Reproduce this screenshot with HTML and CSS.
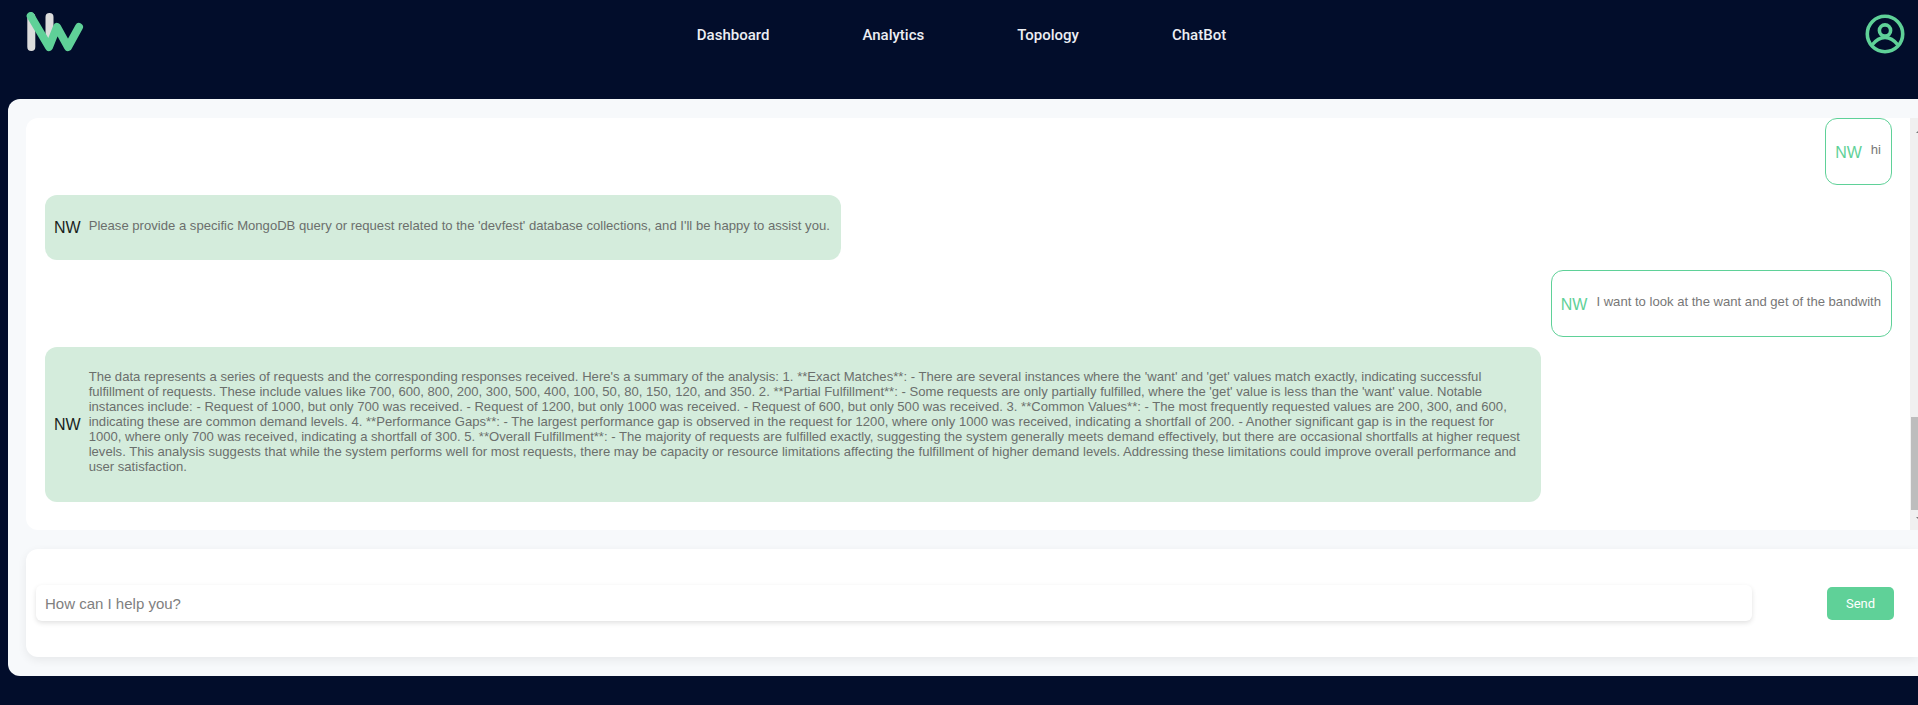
FILE: index.html
```html
<!DOCTYPE html>
<html>
<head>
<meta charset="utf-8"/>
<title>ChatBot</title>
<link rel="stylesheet" href="styles.css">
</head>
<body>

<header class="topbar">
  <svg class="logo" width="62" height="42" viewBox="0 0 62 42" fill="none" stroke-width="8" stroke-linecap="round" stroke-linejoin="round">
    <path d="M5.3 5V35M23.5 5V30" stroke="#dcdcdc"/>
    <path d="M4.7 4L23 35L31 15L42 35L53 15" stroke="#5fd198"/>
  </svg>
  <nav class="nav">
    <a>Dashboard</a>
    <a>Analytics</a>
    <a>Topology</a>
    <a>ChatBot</a>
  </nav>
  <svg class="profile" width="40" height="40" viewBox="0 0 40 40" fill="none" stroke="#5fd198" stroke-width="3.6">
    <circle cx="20" cy="20" r="17.7"/>
    <circle cx="20" cy="16.5" r="5.6"/>
    <path d="M7 31C11 26 15 23.5 20 23.5C25 23.5 29 26 33 31"/>
  </svg>
</header>

<main class="panel">
  <section class="chat">
    <div class="messages">
      <div class="msg user short">
        <span class="tag">NW</span>
        <p>hi</p>
      </div>
      <div class="msg bot first">
        <span class="tag">NW</span>
        <p>Please provide a specific MongoDB query or request related to the 'devfest' database collections, and I'll be happy to assist you.</p>
      </div>
      <div class="msg user second">
        <span class="tag">NW</span>
        <p>I want to look at the want and get of the bandwith</p>
      </div>
      <div class="msg bot long">
        <span class="tag">NW</span>
        <p>The data represents a series of requests and the corresponding responses received. Here's a summary of the analysis: 1. **Exact Matches**: - There are several instances where the 'want' and 'get' values match exactly, indicating successful fulfillment of requests. These include values like 700, 600, 800, 200, 300, 500, 400, 100, 50, 80, 150, 120, and 350. 2. **Partial Fulfillment**: - Some requests are only partially fulfilled, where the 'get' value is less than the 'want' value. Notable instances include: - Request of 1000, but only 700 was received. - Request of 1200, but only 1000 was received. - Request of 600, but only 500 was received. 3. **Common Values**: - The most frequently requested values are 200, 300, and 600, indicating these are common demand levels. 4. **Performance Gaps**: - The largest performance gap is observed in the request for 1200, where only 1000 was received, indicating a shortfall of 200. - Another significant gap is in the request for 1000, where only 700 was received, indicating a shortfall of 300. 5. **Overall Fulfillment**: - The majority of requests are fulfilled exactly, suggesting the system generally meets demand effectively, but there are occasional shortfalls at higher request levels. This analysis suggests that while the system performs well for most requests, there may be capacity or resource limitations affecting the fulfillment of higher demand levels. Addressing these limitations could improve overall performance and user satisfaction.</p>
      </div>
    </div>
    <div class="scrollbar">
      <span class="arrow up"></span>
      <span class="thumb"></span>
      <span class="arrow down"></span>
    </div>
  </section>

  <section class="composer">
    <input class="ask" type="text" placeholder="How can I help you?">
    <button class="send">Send</button>
  </section>
</main>

</body>
</html>
```

FILE: styles.css
```css
html, body {
   margin: 0;
   height: 100%;
   overflow: hidden;
}

body {
   background-color: #020d2b;
   font-family: "Liberation Sans", Arial, sans-serif;
}

.topbar {
   height: 99px;
   display: flex;
   align-items: flex-start;
   box-sizing: border-box;
   padding: 12px 13px 0 26px;
}

.logo {
   flex: none;
}

.nav {
   flex: 1;
   display: flex;
   justify-content: center;
   gap: 93px;
   padding: 13px 30px 0 0;
   font-family: Roboto, sans-serif;
   font-size: 15px;
   font-weight: 500;
   line-height: 20px;
   color: #eceef3;
}

.profile {
   flex: none;
   margin-top: 2px;
}

.panel {
   height: 577px;
   margin-left: 8px;
   box-sizing: border-box;
   padding: 19px 0 19px 18px;
   background-color: #f7f9fb;
   border-radius: 12px 0 0 12px;
   display: flex;
   flex-direction: column;
   gap: 19px;
}

.chat {
   height: 412px;
   flex: none;
   display: flex;
   background-color: white;
   border-radius: 12px 0 0 12px;
}

.messages {
   flex: 1;
   min-width: 0;
   padding: 0 18px 0 19px;
   display: flex;
   flex-direction: column;
   overflow: hidden;
}

.msg {
   display: flex;
   box-sizing: border-box;
   border-radius: 12px;
   flex: none;
}

.msg p {
   margin: 0;
   font-size: 13.1px;
   line-height: 15px;
   color: #6b6f6c;
}

.tag {
   flex: none;
   font-size: 16px;
}

.user {
   align-self: flex-end;
   align-items: flex-start;
   border: 1px solid #5fd198;
   background-color: white;
   padding: 23px 10px 0 9px;
   height: 67px;
}

.user .tag {
   color: #5fd198;
   margin: 2px 9px 0 0;
}

.user p {
   color: #777;
}

.bot {
   align-self: flex-start;
   align-items: center;
   background-color: #d4ecdc;
   padding: 0 12px 0 9px;
}

.bot .tag {
   color: #1a1f1c;
   margin-right: 8px;
}

.first {
   width: 796px;
   height: 65px;
   margin-top: 10px;
   padding-right: 4px;
}

.first p {
   padding-bottom: 4px;
}

.second {
   margin-top: 10px;
}

.long {
   width: 1496px;
   height: 155px;
   margin-top: 10px;
}

.long .tag {
   margin-top: 1px;
}

.long p {
   padding-bottom: 6px;
}

/* wider than what is left of the window, the right part gets clipped */
.scrollbar {
   flex: none;
   width: 17px;
   margin-right: -9px;
   box-sizing: border-box;
   padding: 12px 0 10px;
   background-color: #f0f0f0;
   display: flex;
   flex-direction: column;
   align-items: center;
}

.arrow {
   width: 0;
   height: 0;
   border-left: 3px solid transparent;
   border-right: 3px solid transparent;
}

.up {
   border-bottom: 3px solid #777;
   margin-bottom: auto;
}

.down {
   border-top: 3px solid #777;
}

.thumb {
   width: 15px;
   height: 93px;
   margin-bottom: 7px;
   background-color: #bdbdbd;
}

.composer {
   height: 108px;
   flex: none;
   display: flex;
   align-items: center;
   justify-content: space-between;
   box-sizing: border-box;
   padding: 0 24px 0 10px;
   background-color: white;
   border-radius: 12px 0 0 12px;
   box-shadow: 0 3px 10px rgba(0, 0, 0, 0.07);
}

.ask {
   width: 1716px;
   height: 36px;
   box-sizing: border-box;
   border: none;
   border-radius: 6px;
   padding: 0 9px;
   font-family: "Liberation Sans", Arial, sans-serif;
   font-size: 15px;
   background-color: white;
   box-shadow: 0 2px 5px rgba(0, 0, 0, 0.12);
}

.ask::placeholder {
   color: #808080;
   opacity: 1;
}

.send {
   width: 67px;
   height: 33px;
   border: none;
   border-radius: 5px;
   background-color: #5fd198;
   color: white;
   font-family: Roboto, sans-serif;
   font-size: 13px;
   font-weight: 400;
}
```
